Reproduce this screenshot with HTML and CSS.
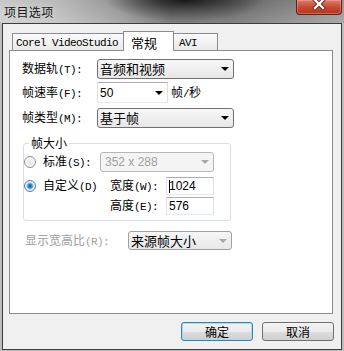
FILE: index.html
```html
<!DOCTYPE html>
<html lang="zh-CN">
<head>
    <meta charset="UTF-8">
    <title>项目选项</title>
    <link rel="stylesheet" href="styles.css">
</head>
<body>
<div class="window">
    <div class="titlebar">
        <span class="title">项目选项</span>
        <span class="close">
            <svg width="44" height="14" viewBox="0 0 44 14">
                <path d="M18 0 L26 8 M26 0 L18 8" stroke="#5a1e12" stroke-width="4" stroke-linecap="square"/>
                <path d="M18 0 L26 8 M26 0 L18 8" stroke="#fff" stroke-width="2.4" stroke-linecap="square"/>
            </svg>
        </span>
    </div>
    <div class="frame">
        <div class="client">
            <div class="tabs">
                <div class="tab tab-corel">Corel VideoStudio</div>
                <div class="tab tab-general active">常规</div>
                <div class="tab tab-avi">AVI</div>
            </div>
            <div class="panel">
                <div class="field field-track">
                    <span class="label">数据轨<span class="key">(T):</span></span>
                    <div class="select select-wide"><span class="value">音频和视频</span><span class="arrow"></span></div>
                </div>
                <div class="field field-rate">
                    <span class="label">帧速率<span class="key">(F):</span></span>
                    <div class="combo"><span class="num">50</span><span class="arrow"></span></div>
                    <span class="unit">帧<span class="key">/</span>秒</span>
                </div>
                <div class="field field-type">
                    <span class="label">帧类型<span class="key">(M):</span></span>
                    <div class="select select-wide"><span class="value">基于帧</span><span class="arrow"></span></div>
                </div>

                <fieldset class="group">
                    <legend>帧大小</legend>
                    <div class="opt opt-std">
                        <span class="radio"></span>
                        <span class="opt-label">标准<span class="key">(S):</span></span>
                        <div class="select select-size disabled"><span class="num">352 x 288</span><span class="arrow"></span></div>
                    </div>
                    <div class="opt opt-custom">
                        <span class="radio checked"></span>
                        <span class="opt-label custom-label">自定义<span class="key">(D)</span></span>
                        <span class="dim-label">宽度<span class="key">(W):</span></span>
                        <div class="textbox"><span class="caret"></span><span class="num">1024</span></div>
                    </div>
                    <div class="opt opt-height">
                        <span class="dim-label">高度<span class="key">(E):</span></span>
                        <div class="textbox"><span class="num">576</span></div>
                    </div>
                </fieldset>

                <div class="field field-aspect">
                    <span class="label label-gray">显示宽高比<span class="key">(R):</span></span>
                    <div class="select select-aspect"><span class="value">来源帧大小</span><span class="arrow"></span></div>
                </div>
            </div>
            <div class="buttons">
                <button class="btn btn-default">确定</button>
                <button class="btn">取消</button>
            </div>
        </div>
    </div>
</div>
</body>
</html>
```

FILE: styles.css
```css
* {
    box-sizing: border-box;
}
body {
    margin: 0;
    background-color: #bdbdbd;
    font-family: "Noto Sans CJK SC", sans-serif;
    font-size: 12px;
    color: #000;
}
.window {
    width: 344px;
    height: 351px;
    display: flex;
    flex-direction: column;
}

/* title bar (blurred glass) */
.titlebar {
    height: 23px;
    flex: none;
    display: flex;
    align-items: center;
    padding-left: 4px;
    background:
        linear-gradient(rgba(255, 255, 255, 0), rgba(255, 255, 255, 0.2)),
        radial-gradient(ellipse 80px 22px at 185px 0, rgba(20, 20, 20, 0.95), rgba(20, 20, 20, 0)),
        linear-gradient(90deg, #c8c8c8 0, #b8b8b8 60px, #939393 120px, #5e5e5e 170px, #626262 230px, #7e7e7e 290px, #959595 344px);
}
.title {
    font-size: 12px;
    letter-spacing: 0.4px;
    color: #151515;
    text-shadow: 0 0 6px rgba(255, 255, 255, 0.7);
    line-height: 14px;
    margin-top: 1px;
}
.close {
    align-self: flex-start;
    margin-left: auto;
    margin-right: 2px;
    width: 46px;
    height: 15px;
    border: 1px solid #5b2418;
    border-top: none;
    border-radius: 0 0 4px 4px;
    background: linear-gradient(#d9806c, #c94a31 50%, #b5361e);
    box-shadow: inset 0 0 0 1px rgba(255, 200, 180, 0.35);
}
.close svg {
    display: block;
}

/* window frame */
.frame {
    flex: 1;
    padding: 0 2px 1px 2px;
}
.client {
    height: 100%;
    border: 1px solid #3d3d3d;
    background-color: #f0f0f0;
    padding: 7px 0 0 6px;
}

/* tabs */
.tabs {
    display: flex;
    align-items: flex-end;
    height: 19px;
    padding-left: 3px;
}
.tab {
    height: 17px;
    border: 1px solid #898c95;
    border-bottom: none;
    background: linear-gradient(#fbfbfb, #e9e9e9);
    display: flex;
    align-items: center;
}
.tab-corel {
    width: 111px;
    border-right: none;
    padding: 2px 0 0 3px;
    font-family: "Liberation Mono", monospace;
    font-size: 11px;
    letter-spacing: -0.6px;
}
.tab-general {
    width: 51px;
    padding: 2px 0 0 7px;
    font-size: 13px;
}
.tab-avi {
    width: 44px;
    border-left: none;
    padding: 2px 0 0 5px;
    font-family: "Liberation Mono", monospace;
    font-size: 11px;
    letter-spacing: -0.6px;
}
.tab.active {
    height: 20px;
    margin-bottom: -1px;
    background: #fff;
    position: relative;
    z-index: 1;
}

/* tab page */
.panel {
    width: 324px;
    height: 264px;
    border: 1px solid #898c95;
    background-color: #fff;
}
.field {
    display: flex;
    align-items: center;
    padding-left: 12px;
}
.field-track {
    margin-top: 8px;
    height: 20px;
}
.field-rate {
    margin-top: 3px;
    height: 21px;
}
.field-type {
    margin-top: 5px;
    height: 20px;
}
.field-aspect {
    margin-top: 10px;
    height: 19px;
    padding-left: 15px;
}
.label {
    width: 75px;
    flex: none;
    white-space: nowrap;
    line-height: 14px;
}
.field-aspect .label {
    width: 103px;
}
.label-gray {
    color: #a0a0a0;
}
.key {
    font-family: "Liberation Mono", monospace;
    font-size: 11px;
    letter-spacing: -0.6px;
}

/* drop-down lists */
.select {
    height: 20px;
    display: flex;
    align-items: center;
    border: 1px solid #707070;
    border-radius: 3px;
    background: linear-gradient(#f7f7f7, #e7e7e7);
    padding: 0 4px 0 2px;
}
.select-wide {
    width: 137px;
}
.value {
    flex: 1;
    font-size: 13px;
    line-height: 16px;
}
.num {
    flex: 1;
    font-family: "Liberation Sans", sans-serif;
    font-size: 12px;
    line-height: 14px;
}
.arrow {
    width: 0;
    height: 0;
    border-left: 4px solid transparent;
    border-right: 4px solid transparent;
    border-top: 4px solid #000;
}
.select.disabled {
    border-color: #b5b8bb;
    background: #f4f4f4;
    color: #a0a0a0;
    padding-left: 4px;
}
.select.disabled .arrow,
.select-aspect .arrow {
    border-top-color: #a8a8a8;
}
.select-size {
    width: 114px;
}
.select-aspect {
    width: 104px;
    height: 19px;
    border-color: #a0a0a0;
}

/* editable combo */
.combo {
    width: 71px;
    height: 21px;
    display: flex;
    align-items: center;
    border: 1px solid;
    border-color: #abadb3 #dbdfe6 #e3e9ef #e2e3ea;
    background: #fff;
    padding: 0 4px 0 2px;
    margin-right: 3px;
}
.unit {
    line-height: 14px;
    white-space: nowrap;
}

/* frame size group */
.group {
    margin: 8px 0 0 13px;
    width: 208px;
    padding: 2px 0 5px 0;
    border: 1px solid #d5dfe5;
    border-radius: 3px;
    min-width: 0;
}
.group legend {
    margin-left: 5px;
    padding: 0 2px;
    line-height: 14px;
}
.opt {
    display: flex;
    align-items: center;
}
.opt-std {
    height: 20px;
}
.opt-custom {
    height: 18px;
    margin-top: 5px;
}
.opt-height {
    height: 18px;
    margin-top: 2px;
    padding-left: 86px;
}
.radio {
    width: 12px;
    height: 12px;
    flex: none;
    margin-right: 7px;
    border: 1px solid #8e8f8f;
    border-radius: 50%;
    background: radial-gradient(circle at 50% 55%, #e4e4e4 0, #f4f4f4 4px, #fdfdfd 6px);
}
.radio.checked {
    border-color: #5a7fa0;
    background: radial-gradient(circle at 50% 50%, #1e5a99 0, #3b86cc 2px, #8ec2ec 3px, #e6eef5 4px, #f6f6f6 6px);
}
.opt-label {
    width: 57px;
    flex: none;
    white-space: nowrap;
    line-height: 14px;
}
.custom-label {
    width: 67px;
}
.dim-label {
    width: 56px;
    flex: none;
    white-space: nowrap;
    line-height: 14px;
}
.textbox {
    width: 48px;
    height: 18px;
    display: flex;
    align-items: center;
    border: 1px solid;
    border-color: #abadb3 #dbdfe6 #e3e9ef #e2e3ea;
    background: #fff;
    padding-left: 2px;
}
.caret {
    width: 1px;
    height: 13px;
    background: #000;
    margin-right: -1px;
    flex: none;
}

/* dialog buttons */
.buttons {
    display: flex;
    justify-content: flex-end;
    gap: 9px;
    margin-top: 8px;
    padding-right: 7px;
}
.btn {
    width: 72px;
    height: 19px;
    padding: 0;
    border: 1px solid #707070;
    border-radius: 3px;
    background: linear-gradient(#f2f2f2, #ebebeb 50%, #dddddd 51%, #cfcfcf);
    font-family: "Noto Sans CJK SC", sans-serif;
    font-size: 12px;
    line-height: 14px;
    color: #000;
}
.btn-default {
    border-color: #3c7fb1;
    box-shadow: inset 0 0 0 1px #a9dbf6;
}
```
